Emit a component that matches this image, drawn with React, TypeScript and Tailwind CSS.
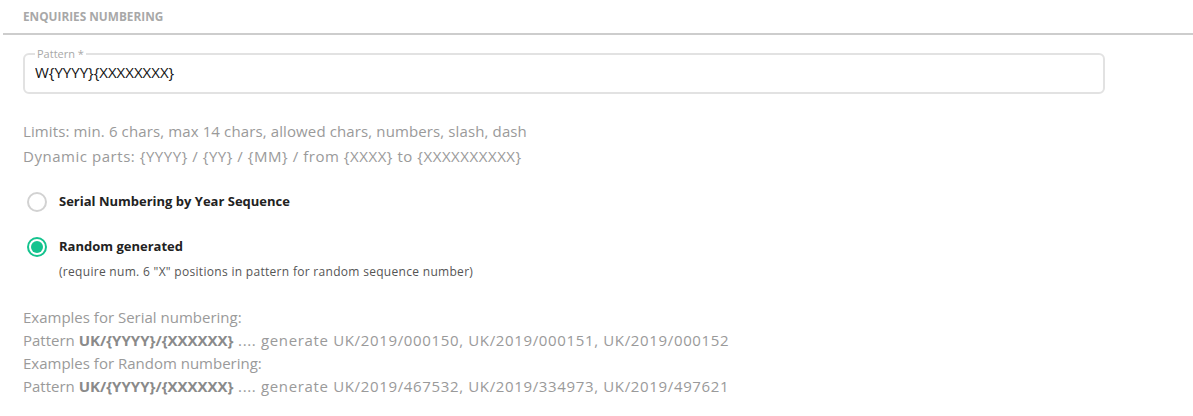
import React, { useState } from 'react';

const App = () => {
  const [pattern, setPattern] = useState('W{YYYY}{XXXXXXXX}');
  const [mode, setMode] = useState<'serial' | 'random'>('random');

  const Radio = ({ checked }: { checked: boolean }) => (
    <span
      className={
        'flex h-[20px] w-[20px] shrink-0 items-center justify-center rounded-full border-2 ' +
        (checked ? 'border-[#14c38e]' : 'border-[#d2d2d2]')
      }
    >
      {checked && <span className="h-[12px] w-[12px] rounded-full bg-[#14c38e]" />}
    </span>
  );

  return (
    <div className="min-h-[416px] bg-white font-['Open_Sans',sans-serif]">
      <div className="pl-[23px] pt-[8px] pb-[8px] text-[11.8px] leading-[17px] font-bold uppercase text-[#a8a8a8]">
        Enquiries numbering
      </div>
      <div className="ml-[3px] h-[2px] bg-[#cdcdcd]" />

      <div className="pl-[23px] pt-[12px]">
        <fieldset className="w-[1082px] rounded-[6px] border-2 border-[#e2e2e2] px-[10px] pb-[8px]">
          <legend className="px-[2px] text-[11px] leading-[13px] text-[#a8a8a8]">Pattern *</legend>
          <input
            className="w-full bg-transparent text-[15px] leading-[22px] text-[#111] outline-none"
            value={pattern}
            onChange={e => setPattern(e.target.value)}
          />
        </fieldset>

        <div className="mt-[25px] text-[15px] leading-[25px] text-[#9a9a9a]">
          <div className="tracking-[0.12px]">Limits: min. 6 chars, max 14 chars, allowed chars, numbers, slash, dash</div>
          <div className="tracking-[0.54px]">
            Dynamic parts: {'{YYYY}'} / {'{YY}'} / {'{MM}'} / from {'{XXXX}'} to {'{XXXXXXXXXX}'}
          </div>
        </div>

        <div className="mt-[23px] flex flex-col gap-[25px] pl-[4px]">
          <label className="flex cursor-pointer items-center gap-[12px]" onClick={() => setMode('serial')}>
            <Radio checked={mode === 'serial'} />
            <span className="text-[13px] font-bold text-[#222]">Serial Numbering by Year Sequence</span>
          </label>
          <div>
            <label className="flex cursor-pointer items-center gap-[12px]" onClick={() => setMode('random')}>
              <Radio checked={mode === 'random'} />
              <span className="text-[13px] font-bold text-[#222]">Random generated</span>
            </label>
            <div className="mt-[6px] pl-[32px] text-[12px] tracking-[0.3px] text-[#555]">
              (require num. 6 "X" positions in pattern for random sequence number)
            </div>
          </div>
        </div>

        <div className="mt-[25px] text-[15px] leading-[23px] text-[#9a9a9a]">
          <div>Examples for Serial numbering:</div>
          <div>
            Pattern <b className="text-[#8a8a8a]">UK/{'{YYYY}'}/{'{XXXXXX}'}</b>
            <span className="tracking-[0.65px]"> .... generate UK/2019/000150, UK/2019/000151, UK/2019/000152</span>
          </div>
          <div>Examples for Random numbering:</div>
          <div>
            Pattern <b className="text-[#8a8a8a]">UK/{'{YYYY}'}/{'{XXXXXX}'}</b>
            <span className="tracking-[0.65px]"> .... generate UK/2019/467532, UK/2019/334973, UK/2019/497621</span>
          </div>
        </div>
      </div>
    </div>
  );
};

export default App;
